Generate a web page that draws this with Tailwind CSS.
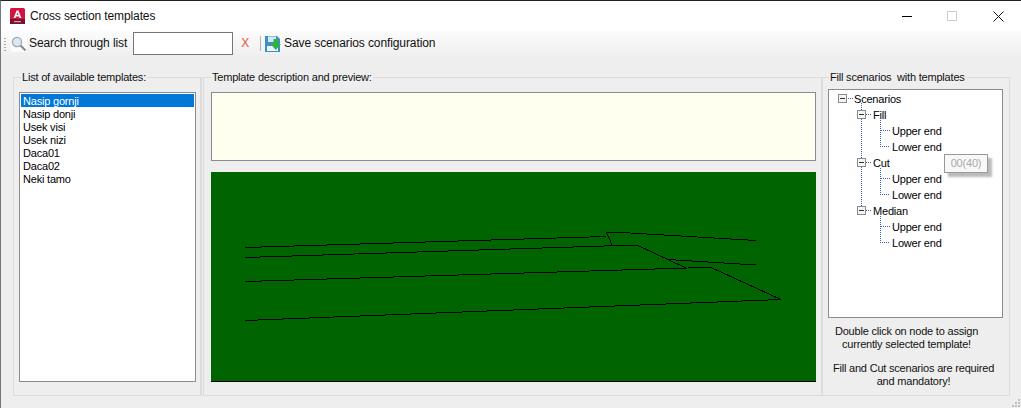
<!DOCTYPE html>
<html>
<head>
<meta charset="utf-8">
<script src="https://cdn.jsdelivr.net/npm/@tailwindcss/browser@4"></script>
</head>
<body class="m-0 overflow-hidden">
<div class="w-[1021px] h-[408px] flex flex-col overflow-hidden bg-[#eeeeee] border-t border-t-[#222222] border-l border-l-[#777777] font-['Liberation_Sans',sans-serif] text-[11px] leading-[13px] tracking-[-0.2px] text-black relative">
  <!-- title bar -->
  <div class="h-[30px] bg-white flex items-center pl-[9px] shrink-0">
    <svg class="w-[15px] h-[16px] mr-[5px]" viewBox="0 0 15 16"><rect width="15" height="16" rx="1.5" fill="#d3123f"/><rect y="11" width="15" height="5" fill="#7a1130"/><path d="M3.6 10 L6.6 2.6 H8.4 L11.4 10 H9.6 L9 8.4 H6 L5.4 10 Z M6.6 6.9 H8.4 L7.5 4.5 Z" fill="#fff" fill-rule="evenodd"/><rect x="4" y="13" width="7" height="1.2" fill="#c9a3ae"/></svg>
    <span class="text-[12px] tracking-[-0.12px] text-[#111]">Cross section templates</span>
    <div class="ml-auto flex items-center">
      <svg class="w-[11px] h-[11px] mr-[35px]" viewBox="0 0 11 11"><path d="M0.5 5.5H10.5" stroke="#000" stroke-width="1" shape-rendering="crispEdges"/></svg>
      <svg class="w-[10px] h-[10px] mr-[36px]" viewBox="0 0 10 10"><rect x="0.5" y="0.5" width="9" height="9" fill="none" stroke="#cccccc"/></svg>
      <svg class="w-[11px] h-[11px] mr-[17px]" viewBox="0 0 11 11"><path d="M0.5 0.5L10.5 10.5M10.5 0.5L0.5 10.5" stroke="#111" stroke-width="1"/></svg>
    </div>
  </div>
  <!-- toolbar -->
  <div class="h-[27px] shrink-0 pb-[2px] bg-gradient-to-b from-[#fcfcfc] to-[#eeeeee] flex items-center text-[12px] tracking-[-0.1px] text-[#111]">
    <svg class="w-[2px] h-[14px] ml-[3px] mr-[5px]" viewBox="0 0 2 14"><path d="M0 1h2v1H0zM0 4h2v1H0zM0 7h2v1H0zM0 10h2v1H0zM0 13h2v1H0z" fill="#a8a8a8"/></svg>
    <svg class="w-[16px] h-[16px] mr-[2px]" viewBox="0 0 16 16"><rect width="16" height="16" fill="#fbfbfb"/><circle cx="6" cy="6" r="4.6" fill="#dbe9f5" stroke="#9aa7b3" stroke-width="1.2"/><path d="M9.5 9.5L14.5 14.5" stroke="#8a8a8a" stroke-width="2"/></svg>
    <span>Search through list</span>
    <div class="w-[100px] h-[23px] ml-[6px] bg-white border border-[#767676]"></div>
    <span class="ml-[8px] text-[#e8503a]">X</span>
    <div class="w-px h-[15px] bg-[#b5b5b5] ml-[11px] mr-[4px]"></div>
    <svg class="w-[16px] h-[16px] mr-[3px]" viewBox="0 0 16 16"><path d="M0 0H12L15 3V16H0Z" fill="#3c90c8"/><rect x="3" y="0.5" width="8" height="5.5" fill="#d7e9f5"/><rect x="2" y="10" width="11" height="5" fill="#eef5f9"/><path d="M8.5 3H13V8H16L10.8 14L5.5 8H8.5Z" fill="#2fb33f"/></svg>
    <span>Save scenarios configuration</span>
  </div>
  <!-- main -->
  <div class="flex-1 flex pl-[12px] pt-[13px] pb-[12px] items-stretch">
    <!-- left group -->
    <fieldset class="w-[189px] border border-[#dcdcdc] border-r-2 pl-[5px] pr-[4px] pb-[13px] flex flex-col min-h-0">
      <legend class="ml-[2px] px-px leading-[13px] text-[#111]">List of available templates:</legend>
      <div class="mt-[8px] h-[290px] bg-white border border-[#8a8a92] p-px">
        <div class="h-[13px] pt-px bg-[#0078d7] text-white pl-[2px]">Nasip gornji</div>
        <div class="h-[13px] pt-px pl-[2px]">Nasip donji</div>
        <div class="h-[13px] pt-px pl-[2px]">Usek visi</div>
        <div class="h-[13px] pt-px pl-[2px]">Usek nizi</div>
        <div class="h-[13px] pt-px pl-[2px]">Daca01</div>
        <div class="h-[13px] pt-px pl-[2px]">Daca02</div>
        <div class="h-[13px] pt-px pl-[2px]">Neki tamo</div>
      </div>
    </fieldset>
    <!-- middle group -->
    <fieldset class="ml-px w-[619px] border border-[#dcdcdc] pl-[7px] pr-[5px] pb-[12px]">
      <legend class="ml-0 px-px leading-[13px] text-[#111]">Template description and preview:</legend>
      <div class="mt-[8px] h-[69px] w-[605px] bg-[#fffff0] border border-[#8a8a92]"></div>
      <div class="mt-[11px] h-[210px] w-[605px] bg-[#006400] border-b border-black">
        <svg class="w-[605px] h-[209px] block" viewBox="211 172 605 209" fill="none" stroke="#000" stroke-width="1" shape-rendering="crispEdges">
          <polyline points="245,247.5 606,236.5"/>
          <polyline points="606.5,232.5 622,232.5 756,240.5"/>
          <polyline points="606.5,232.5 612.5,246"/>
          <polyline points="245,257.5 620,245.5 638,245.5 686,268"/>
          <polyline points="668,259.5 756,265"/>
          <polyline points="245,281.5 688,268 711,267.5 781,299.5"/>
          <polyline points="245,320.5 781,299.5"/>
        </svg>
      </div>
    </fieldset>
    <!-- right group -->
    <fieldset class="relative w-[188px] border border-[#dcdcdc] pl-[5px]">
      <legend class="ml-[1px] px-px leading-[13px] text-[#111]">Fill scenarios&nbsp; with templates</legend>
      <div class="relative mt-[5px] w-[175px] h-[229px] bg-white border border-[#8a8a92] pt-[1px]">
        <svg class="absolute left-0 top-0 w-[173px] h-[227px]" viewBox="829 90 173 227" fill="none" shape-rendering="crispEdges">
          <g stroke="#3a5fd0" stroke-dasharray="1 1">
            <path d="M847.5 98.5H852.5M861.5 103V206M866 114.5H871M866 162.5H871M866 210.5H871"/>
            <path d="M880.5 120V146.5H890M880.5 130.5H890M880.5 168V194.5H890M880.5 178.5H890M880.5 216V242.5H890M880.5 226.5H890"/>
          </g>
          <g fill="#f4f4f4" stroke="#8a8a8a">
            <rect x="838.5" y="94.5" width="8" height="8"/><rect x="857.5" y="110.5" width="8" height="8"/><rect x="857.5" y="158.5" width="8" height="8"/><rect x="857.5" y="206.5" width="8" height="8"/>
          </g>
          <path d="M840 98.5H845M859 114.5H864M859 162.5H864M859 210.5H864" stroke="#333"/>
        </svg>
        <div class="relative">
          <div class="h-[16px] flex items-center pl-[25px]">Scenarios</div>
          <div class="h-[16px] flex items-center pl-[44px]">Fill</div>
          <div class="h-[16px] flex items-center pl-[63px]">Upper end</div>
          <div class="h-[16px] flex items-center pl-[63px]">Lower end</div>
          <div class="h-[16px] flex items-center pl-[44px]">Cut</div>
          <div class="h-[16px] flex items-center pl-[63px]">Upper end</div>
          <div class="h-[16px] flex items-center pl-[63px]">Lower end</div>
          <div class="h-[16px] flex items-center pl-[44px]">Median</div>
          <div class="h-[16px] flex items-center pl-[63px]">Upper end</div>
          <div class="h-[16px] flex items-center pl-[63px]">Lower end</div>
        </div>
        <div class="absolute left-[115px] top-[64px] w-[44px] h-[19px] bg-[#f8f8f8] border border-[#999999] text-[#a8a8a8] flex items-center justify-center shadow-[4px_4px_2px_#bbbbbb]">00(40)</div>
      </div>
      <div class="mt-[6px] pt-px text-center text-[#111]">
        <p class="w-[157px]">Double click on node to assign<br>currently selected template!</p>
        <p class="mt-[11px] w-[171px]">Fill and Cut scenarios are required<br>and mandatory!</p>
      </div>
    </fieldset>
  </div>
  <!-- resize grip -->
  <svg class="absolute right-0 bottom-0 w-[10px] h-[10px]" viewBox="0 0 10 10"><path d="M7 1h2v2H7zM4 4h2v2H4zM7 4h2v2H7zM1 7h2v2H1zM4 7h2v2H4zM7 7h2v2H7z" fill="#c0c0c0"/></svg>
</div>
</body>
</html>
